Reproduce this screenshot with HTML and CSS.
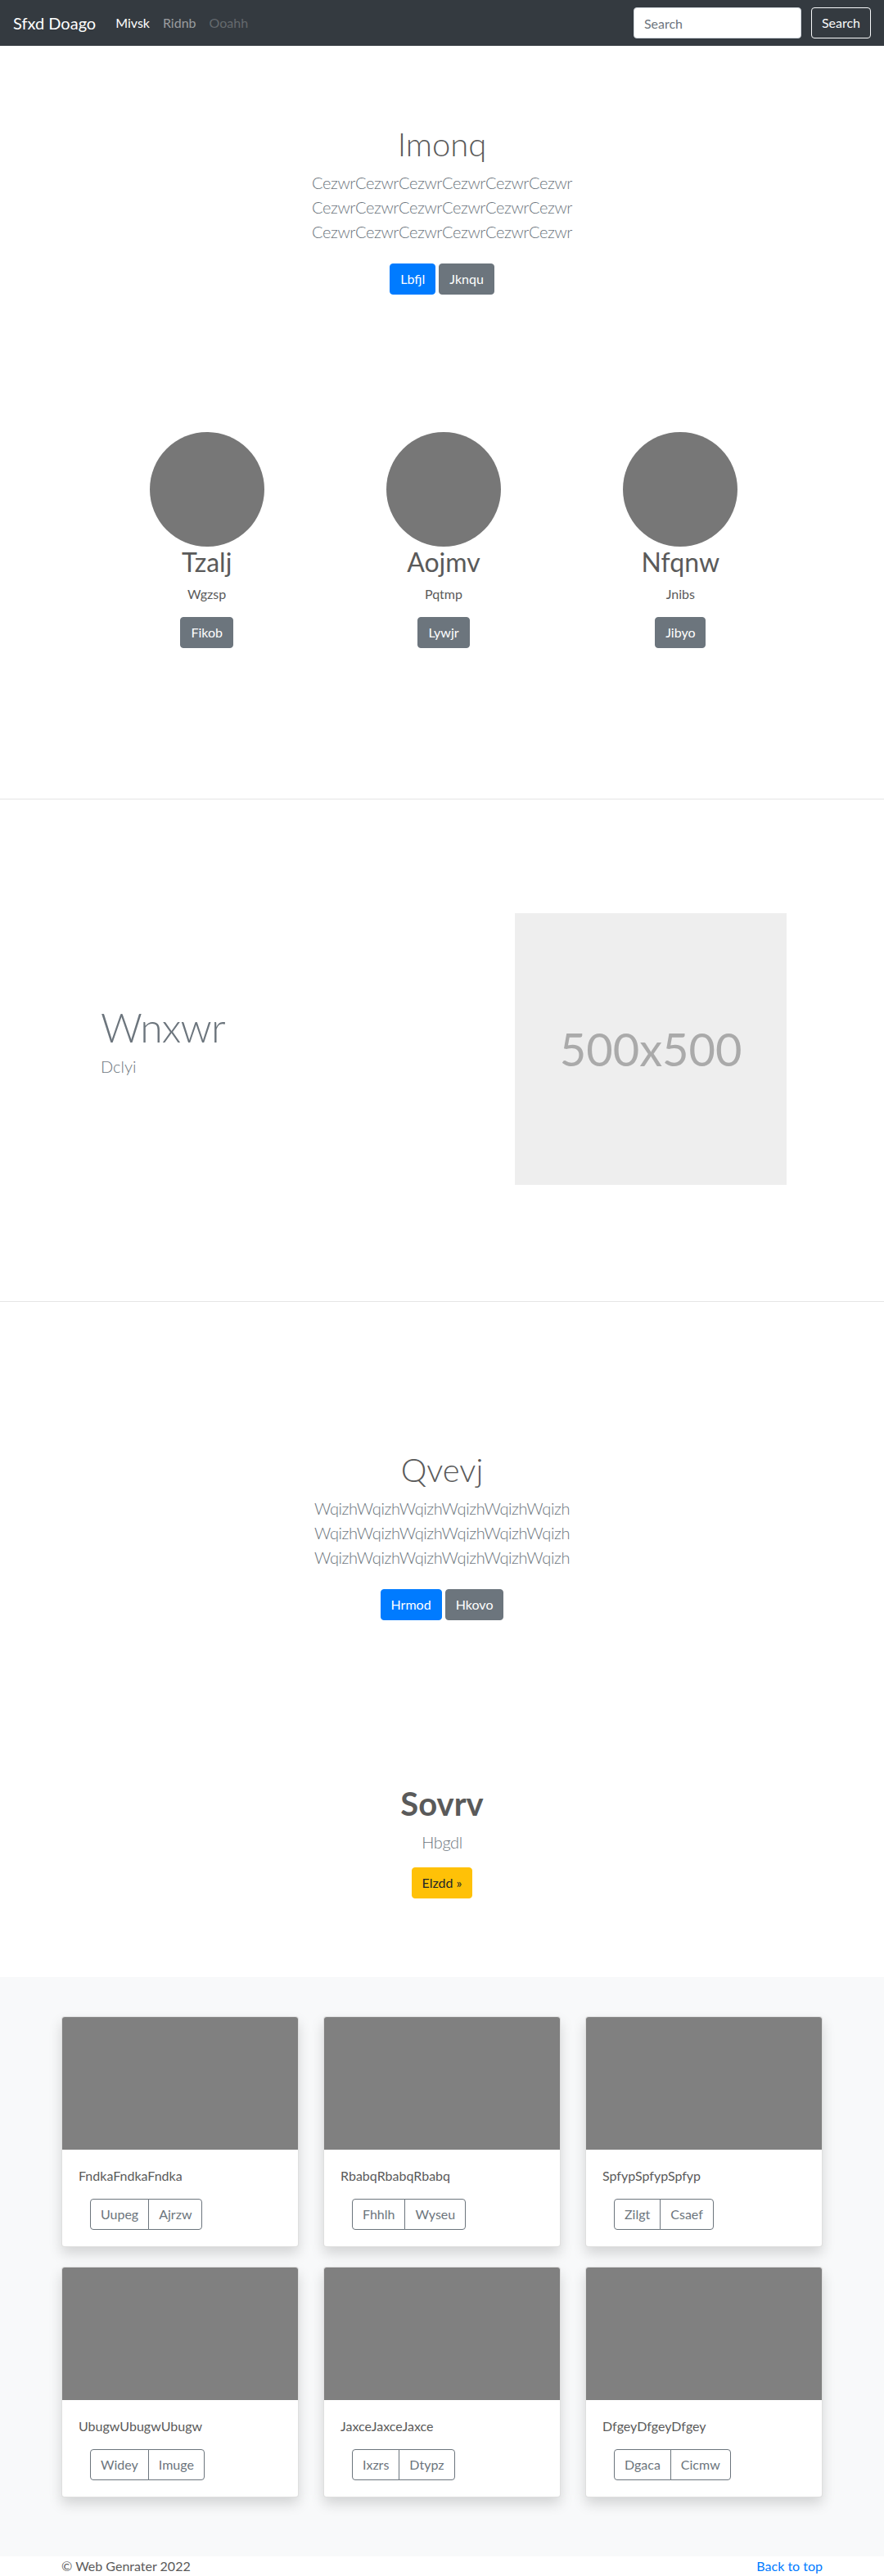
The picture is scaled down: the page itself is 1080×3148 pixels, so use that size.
FILE: index.html
```html
<!DOCTYPE html>
<html lang="en">
<head>
<meta charset="utf-8">
<title>Sfxd Doago</title>
<link rel="stylesheet" href="styles.css">
</head>
<body>
<nav class="navbar">
  <a class="brand" href="#">Sfxd Doago</a>
  <ul class="nav-links">
    <li><a class="nav-link active" href="#">Mivsk</a></li>
    <li><a class="nav-link" href="#">Ridnb</a></li>
    <li><a class="nav-link disabled" href="#">Ooahh</a></li>
  </ul>
  <form class="search">
    <input class="search-input" type="text" placeholder="Search">
    <button class="search-btn" type="button">Search</button>
  </form>
</nav>

<main>
  <section class="jumbotron">
    <div class="container">
      <h1 class="jumbo-heading">Imonq</h1>
      <p class="lead">CezwrCezwrCezwrCezwrCezwrCezwr<br>CezwrCezwrCezwrCezwrCezwrCezwr<br>CezwrCezwrCezwrCezwrCezwrCezwr</p>
      <p class="actions"><a class="btn btn-primary" href="#">Lbfjl</a> <a class="btn btn-secondary" href="#">Jknqu</a></p>
    </div>
  </section>

  <section class="marketing">
    <div class="marketing-row">
      <div class="mk-col">
        <svg class="circle" width="140" height="140" viewBox="0 0 140 140"><circle cx="70" cy="70" r="70" fill="#777"/></svg>
        <h2 class="mk-title">Tzalj</h2>
        <p class="mk-text">Wgzsp</p>
        <p class="mk-action"><a class="btn btn-secondary" href="#">Fikob</a></p>
      </div>
      <div class="mk-col">
        <svg class="circle" width="140" height="140" viewBox="0 0 140 140"><circle cx="70" cy="70" r="70" fill="#777"/></svg>
        <h2 class="mk-title">Aojmv</h2>
        <p class="mk-text">Pqtmp</p>
        <p class="mk-action"><a class="btn btn-secondary" href="#">Lywjr</a></p>
      </div>
      <div class="mk-col">
        <svg class="circle" width="140" height="140" viewBox="0 0 140 140"><circle cx="70" cy="70" r="70" fill="#777"/></svg>
        <h2 class="mk-title">Nfqnw</h2>
        <p class="mk-text">Jnibs</p>
        <p class="mk-action"><a class="btn btn-secondary" href="#">Jibyo</a></p>
      </div>
    </div>
  </section>

  <hr class="divider divider-first">

  <section class="featurette">
    <div class="feat-row">
      <div class="feat-text">
        <h2 class="feat-heading">Wnxwr</h2>
        <p class="lead">Dclyi</p>
      </div>
      <div class="feat-media">
        <div class="placeholder">500x500</div>
      </div>
    </div>
  </section>

  <hr class="divider divider-second">

  <section class="jumbotron">
    <div class="container">
      <h1 class="jumbo-heading">Qvevj</h1>
      <p class="lead">WqizhWqizhWqizhWqizhWqizhWqizh<br>WqizhWqizhWqizhWqizhWqizhWqizh<br>WqizhWqizhWqizhWqizhWqizhWqizh</p>
      <p class="actions"><a class="btn btn-primary" href="#">Hrmod</a> <a class="btn btn-secondary" href="#">Hkovo</a></p>
    </div>
  </section>

  <section class="jumbotron cta">
    <div class="container">
      <h1 class="cta-heading">Sovrv</h1>
      <p class="lead">Hbgdl</p>
      <p class="cta-action"><a class="btn btn-warning" href="#">Elzdd &raquo;</a></p>
    </div>
  </section>

  <section class="album">
    <div class="container">
      <div class="card-grid">
        <div class="card">
          <div class="card-img"></div>
          <div class="card-body">
            <p class="card-text">FndkaFndkaFndka</p>
            <div class="btn-group"><a class="btn btn-outline" href="#">Uupeg</a><a class="btn btn-outline" href="#">Ajrzw</a></div>
          </div>
        </div>
        <div class="card">
          <div class="card-img"></div>
          <div class="card-body">
            <p class="card-text">RbabqRbabqRbabq</p>
            <div class="btn-group"><a class="btn btn-outline" href="#">Fhhlh</a><a class="btn btn-outline" href="#">Wyseu</a></div>
          </div>
        </div>
        <div class="card">
          <div class="card-img"></div>
          <div class="card-body">
            <p class="card-text">SpfypSpfypSpfyp</p>
            <div class="btn-group"><a class="btn btn-outline" href="#">Zilgt</a><a class="btn btn-outline" href="#">Csaef</a></div>
          </div>
        </div>
        <div class="card">
          <div class="card-img"></div>
          <div class="card-body">
            <p class="card-text">UbugwUbugwUbugw</p>
            <div class="btn-group"><a class="btn btn-outline" href="#">Widey</a><a class="btn btn-outline" href="#">Imuge</a></div>
          </div>
        </div>
        <div class="card">
          <div class="card-img"></div>
          <div class="card-body">
            <p class="card-text">JaxceJaxceJaxce</p>
            <div class="btn-group"><a class="btn btn-outline" href="#">Ixzrs</a><a class="btn btn-outline" href="#">Dtypz</a></div>
          </div>
        </div>
        <div class="card">
          <div class="card-img"></div>
          <div class="card-body">
            <p class="card-text">DfgeyDfgeyDfgey</p>
            <div class="btn-group"><a class="btn btn-outline" href="#">Dgaca</a><a class="btn btn-outline" href="#">Cicmw</a></div>
          </div>
        </div>
      </div>
    </div>
  </section>
</main>

<footer class="footer">
  <div class="container footer-inner">
    <p class="copy">&copy; Web Genrater 2022</p>
    <a class="to-top" href="#">Back to top</a>
  </div>
</footer>
</body>
</html>
```

FILE: styles.css
```css
* { box-sizing: border-box; }

body {
  margin: 0;
  font-family: Lato, "Open Sans", "Liberation Sans", sans-serif;
  font-size: 16px;
  line-height: 1.5;
  color: #5a5a5a;
  background: #fff;
}

a { text-decoration: none; }

/* Navbar */
.navbar {
  display: flex;
  align-items: center;
  height: 56px;
  padding: 8px 16px;
  background: #343a40;
}
.brand {
  font-size: 20px;
  line-height: 30px;
  padding: 5px 0;
  margin-right: 16px;
  color: #fff;
}
.nav-links {
  display: flex;
  list-style: none;
  margin: 0;
  padding: 0;
}
.nav-link {
  display: block;
  padding: 8px;
  color: rgba(255, 255, 255, 0.5);
}
.nav-link.active { color: #fff; }
.nav-link.disabled { color: rgba(255, 255, 255, 0.25); }
.search {
  margin: 0 0 0 auto;
  display: flex;
  align-items: center;
}
.search-input {
  width: 205px;
  height: 38px;
  padding: 6px 12px;
  margin-right: 12px;
  font-family: inherit;
  font-size: 16px;
  color: #495057;
  background: #fff;
  border: 1px solid #ced4da;
  border-radius: 4px;
}
.search-input::placeholder { color: #6c757d; }
.search-btn {
  height: 38px;
  padding: 6px 12px;
  font-family: inherit;
  font-size: 16px;
  line-height: 1.5;
  color: #f8f9fa;
  background: transparent;
  border: 1px solid #f8f9fa;
  border-radius: 4px;
}

/* Shared */
.container {
  max-width: 960px;
  margin: 0 auto;
  padding: 0 15px;
}
.lead {
  font-size: 20px;
  font-weight: 300;
  line-height: 1.5;
  color: #6c757d;
  margin: 0 0 16px;
}
.btn {
  display: inline-block;
  font-size: 16px;
  line-height: 1.5;
  padding: 6px 12px;
  border: 1px solid transparent;
  border-radius: 4px;
  font-weight: 400;
  text-align: center;
}
.btn-primary { background: #007bff; border-color: #007bff; color: #fff; }
.btn-secondary { background: #6c757d; border-color: #6c757d; color: #fff; }
.btn-warning { background: #ffc107; border-color: #ffc107; color: #212529; }

/* Jumbotron */
.jumbotron {
  padding: 96px 0;
  text-align: center;
}
.jumbo-heading {
  font-size: 40px;
  font-weight: 300;
  line-height: 1.2;
  margin: 0 0 8px;
}
.jumbotron .lead { letter-spacing: -0.4px; }
.actions { margin: 0; }
.actions .btn { margin: 8px 0; }

.cta-heading {
  font-size: 40px;
  font-weight: 700;
  line-height: 1.2;
  margin: 0 0 8px;
}
.cta-action { margin: 0; }

/* Marketing */
.marketing {
  padding: 64px 104px 64px 108px;
}
.marketing-row {
  display: grid;
  grid-template-columns: repeat(3, 1fr);
}
.mk-col {
  text-align: center;
  margin-bottom: 24px;
  padding: 0 15px;
}
.circle {
  display: block;
  margin: 0 auto;
}
.mk-title {
  font-size: 32px;
  font-weight: 400;
  line-height: 1.2;
  margin: 0 0 8px;
}
.mk-text { margin: 0 12px 16px; }
.mk-action { margin: 0 0 16px; }

/* Divider */
.divider {
  border: 0;
  border-top: 1px solid rgba(0, 0, 0, 0.1);
}
.divider-first { margin: 80px 0; }
.divider-second { margin: 80px 0 85px; }

/* Featurette */
.featurette {
  padding: 59px 104px 62px 108px;
}
.feat-row {
  display: flex;
  align-items: center;
}
.feat-text {
  flex: 0 0 58.3333%;
  padding: 0 15px;
}
.feat-media {
  flex: 0 0 41.6667%;
  padding: 0 15px;
}
.feat-heading {
  font-size: 50px;
  font-weight: 300;
  line-height: 1;
  letter-spacing: -0.8px;
  color: #6c757d;
  margin: 0 0 8px;
}
.placeholder {
  aspect-ratio: 1 / 1;
  background: #eee;
  color: #aaa;
  font-size: 56px;
  display: flex;
  align-items: center;
  justify-content: center;
}

/* Album */
.album {
  background: #f8f9fa;
  padding: 48px 0;
}
.card-grid {
  display: grid;
  grid-template-columns: repeat(3, 1fr);
  column-gap: 30px;
}
.card {
  background: #fff;
  border: 1px solid rgba(0, 0, 0, 0.125);
  border-radius: 4px;
  margin-bottom: 24px;
  box-shadow: 0 8px 16px rgba(0, 0, 0, 0.15);
  overflow: hidden;
}
.card-img {
  aspect-ratio: 16 / 9;
  background: #808080;
}
.card-body { padding: 20px; }
.card-text { margin: 0 0 16px; }
.btn-group {
  display: inline-flex;
  margin-left: 14px;
}
.btn-outline {
  color: #6c757d;
  border-color: #6c757d;
  background: transparent;
}
.btn-group .btn-outline:first-child {
  border-top-right-radius: 0;
  border-bottom-right-radius: 0;
}
.btn-group .btn-outline:last-child {
  margin-left: -1px;
  border-top-left-radius: 0;
  border-bottom-left-radius: 0;
}

/* Footer */
.footer-inner {
  display: flex;
  justify-content: space-between;
}
.copy { margin: 0; }
.to-top { color: #007bff; }
```
